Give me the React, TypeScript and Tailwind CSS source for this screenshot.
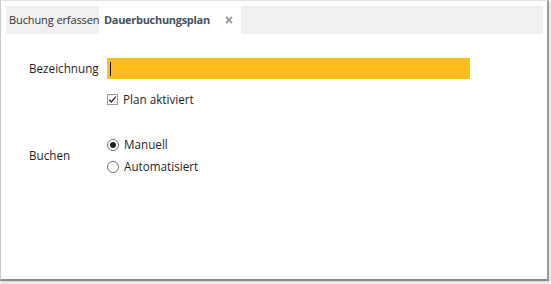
import React, { useState } from 'react';

const App: React.FC = () => {
    const [active, setActive] = useState(true);
    const [mode, setMode] = useState<'manuell' | 'auto'>('manuell');

    return (
        <div className="w-[551px] h-[284px] bg-white font-['Open_Sans',sans-serif] text-[11.7px] text-[#1f1f1f] whitespace-nowrap">
            <div className="w-[549px] h-[281px] border-l border-t border-r-2 border-b-2 border-l-[#c8c8c8] border-t-[#e4e4e4] border-r-[#9d9d9d] border-b-[#8a8a8a] shadow-[1px_2px_2px_rgba(0,0,0,0.15)] px-[5px] pt-[5px]">
                <div className="flex h-[28px] w-[537px] bg-[#f0f0f0] text-[11px]">
                    <div className="flex items-center pl-[3px] w-[93px] text-[#333] tracking-[-0.1px]">Buchung erfassen</div>
                    <div className="flex items-center bg-white w-[142px] pl-[5px] pr-[4px]">
                        <span className="font-bold text-[#44505f] tracking-[-0.3px]">Dauerbuchungsplan</span>
                        <svg className="ml-auto mr-[4px]" width="8" height="8" viewBox="0 0 8 8">
                            <path d="M1 1 L7 7 M7 1 L1 7" stroke="#9b9b9b" strokeWidth="1.8" />
                        </svg>
                    </div>
                </div>

                <div className="pl-[23px] pt-[24px]">
                    <div className="flex items-center h-[21px]">
                        <label className="w-[78px]">Bezeichnung</label>
                        <div className="flex items-center w-[363px] h-[21px] bg-[#fdbd1d] pl-[3px]">
                            <div className="w-px h-[14px] bg-[#111]" />
                        </div>
                    </div>

                    <div className="flex items-center ml-[78px] mt-[12px] gap-[5px] cursor-pointer" onClick={() => setActive(!active)}>
                        <div className="w-[11px] h-[11px] border border-[#9a9a9a] bg-white flex items-center justify-center">
                            {active && (
                                <svg width="9" height="9" viewBox="0 0 9 9">
                                    <path d="M1.2 4.6 L3.4 7 L7.8 1.6" fill="none" stroke="#222" strokeWidth="1.3" />
                                </svg>
                            )}
                        </div>
                        <span>Plan aktiviert</span>
                    </div>

                    <div className="flex items-center mt-[28px]">
                        <div className="w-[78px]">Buchen</div>
                        <div className="flex flex-col gap-[6px]">
                            {[
                                { id: 'manuell', label: 'Manuell' },
                                { id: 'auto', label: 'Automatisiert' },
                            ].map((o) => (
                                <div key={o.id} className="flex items-center gap-[5px] h-[16px] cursor-pointer" onClick={() => setMode(o.id as any)}>
                                    <div className="w-[12px] h-[12px] rounded-full border border-[#707070] bg-white flex items-center justify-center">
                                        {mode === o.id && <div className="w-[6px] h-[6px] rounded-full bg-[#222]" />}
                                    </div>
                                    <span>{o.label}</span>
                                </div>
                            ))}
                        </div>
                    </div>
                </div>
            </div>
        </div>
    );
};

export default App;
